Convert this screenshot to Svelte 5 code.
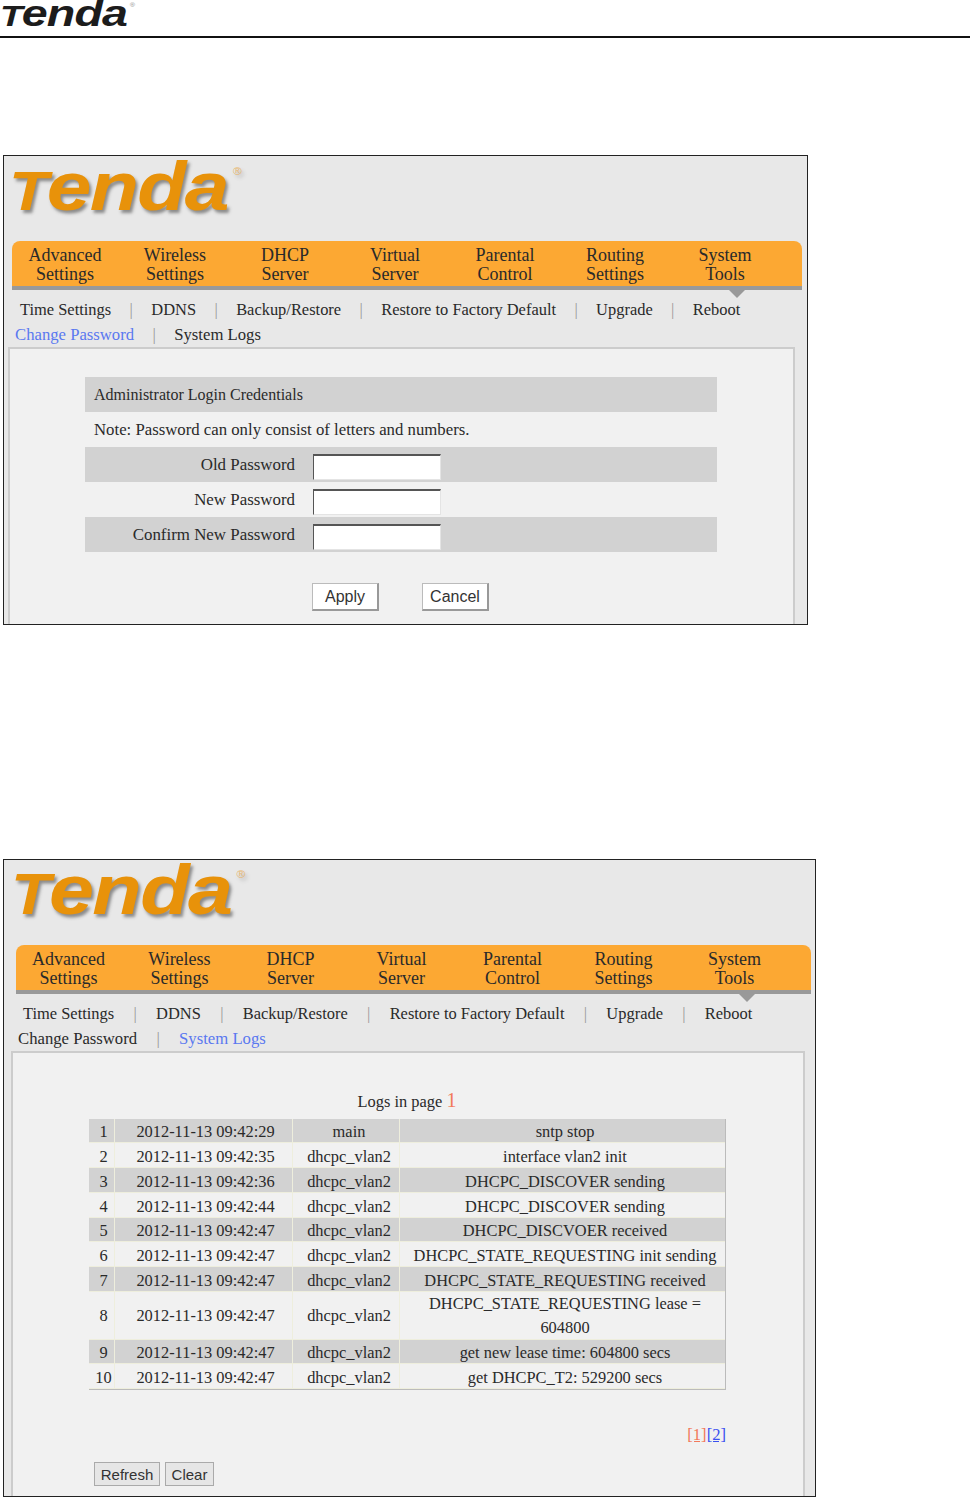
<script>
  const navItems = [
    ['Advanced', 'Settings'],
    ['Wireless', 'Settings'],
    ['DHCP', 'Server'],
    ['Virtual', 'Server'],
    ['Parental', 'Control'],
    ['Routing', 'Settings'],
    ['System', 'Tools']
  ];

  const subRow1 = ['Time Settings', 'DDNS', 'Backup/Restore', 'Restore to Factory Default', 'Upgrade', 'Reboot'];

  const passwordFields = ['Old Password', 'New Password', 'Confirm New Password'];

  const logs = [
    ['2012-11-13 09:42:29', 'main', 'sntp stop'],
    ['2012-11-13 09:42:35', 'dhcpc_vlan2', 'interface vlan2 init'],
    ['2012-11-13 09:42:36', 'dhcpc_vlan2', 'DHCPC_DISCOVER sending'],
    ['2012-11-13 09:42:44', 'dhcpc_vlan2', 'DHCPC_DISCOVER sending'],
    ['2012-11-13 09:42:47', 'dhcpc_vlan2', 'DHCPC_DISCVOER received'],
    ['2012-11-13 09:42:47', 'dhcpc_vlan2', 'DHCPC_STATE_REQUESTING init sending'],
    ['2012-11-13 09:42:47', 'dhcpc_vlan2', 'DHCPC_STATE_REQUESTING received'],
    ['2012-11-13 09:42:47', 'dhcpc_vlan2', 'DHCPC_STATE_REQUESTING lease = 604800'],
    ['2012-11-13 09:42:47', 'dhcpc_vlan2', 'get new lease time: 604800 secs'],
    ['2012-11-13 09:42:47', 'dhcpc_vlan2', 'get DHCPC_T2: 529200 secs']
  ];
</script>

{#snippet wordmark()}
  <span class="word"><span class="t">T</span>enda<sup>®</sup></span>
{/snippet}

{#snippet routerTop(active)}
  <div class="brand">{@render wordmark()}</div>
  <nav class="nav">
    {#each navItems as item}
      <div class="nav-item">{item[0]}<br />{item[1]}</div>
    {/each}
  </nav>
  <div class="sub-nav">
    <div class="sub-row first">
      {#each subRow1 as label, i}
        {#if i > 0}<span class="sep">|</span>{/if}
        <span>{label}</span>
      {/each}
    </div>
    <div class="sub-row second">
      <span class:active={active === 'Change Password'}>Change Password</span>
      <span class="sep">|</span>
      <span class:active={active === 'System Logs'}>System Logs</span>
    </div>
  </div>
{/snippet}

<header class="doc-header">
  <div class="doc-logo">{@render wordmark()}</div>
</header>

<section class="shot shot-password">
  {@render routerTop('Change Password')}
  <div class="panel">
    <div class="form-table">
      <div class="form-row grey title">Administrator Login Credentials</div>
      <div class="form-row title note">Note: Password can only consist of letters and numbers.</div>
      {#each passwordFields as field, i}
        <div class="form-row field" class:grey={i % 2 === 0}>
          <label for="pw{i}">{field}</label>
          <input id="pw{i}" type="password" />
        </div>
      {/each}
    </div>
    <div class="form-actions">
      <button class="btn-white">Apply</button>
      <button class="btn-white">Cancel</button>
    </div>
  </div>
</section>

<section class="shot shot-logs">
  {@render routerTop('System Logs')}
  <div class="panel">
    <p class="logs-title">Logs in page <span class="page-no">1</span></p>
    <table class="log-table">
      <colgroup>
        <col class="c-num" />
        <col class="c-time" />
        <col class="c-proc" />
        <col />
      </colgroup>
      <tbody>
        {#each logs as log, i}
          <tr class:grey={i % 2 === 0} class:tall={i === 7} class:short={i === 0 || i === 4 || i === 8}>
            <td class="num">{i + 1}</td>
            <td class="time">{log[0]}</td>
            <td class="proc">{log[1]}</td>
            <td class="msg">{log[2]}</td>
          </tr>
        {/each}
      </tbody>
    </table>
    <div class="pager"><a href="#p1" class="cur">[1]</a><a href="#p2">[2]</a></div>
    <div class="log-actions">
      <button class="btn-grey refresh">Refresh</button>
      <button class="btn-grey clear">Clear</button>
    </div>
  </div>
</section>

<style>
  :global(body) {
    background: #fff;
    font-family: "Liberation Serif", serif;
    color: #2a2a2a;
  }

  .doc-header {
    height: 36px;
    border-bottom: 2px solid #111;
    --logo-stretch: 1.26;
  }

  .doc-logo {
    font: italic bold 37px/28px "Liberation Sans", sans-serif;
    color: #1c1c1c;
    white-space: nowrap;
  }

  .word {
    display: inline-block;
    transform: scaleX(var(--logo-stretch));
    transform-origin: left;
    letter-spacing: -0.02em;
  }

  .t {
    font-size: 0.8em;
  }

  .word sup {
    font-size: 0.15em;
    font-weight: normal;
    letter-spacing: 0;
    vertical-align: 3.4em;
    line-height: 0;
    margin-left: 0.4em;
    opacity: 0.55;
  }

  .shot {
    margin-left: 3px;
    box-sizing: border-box;
    border: 1px solid #222;
    background: #e8e8e8;
    display: flex;
    flex-direction: column;
  }

  .shot-password {
    margin-top: 117px;
    width: 805px;
    height: 470px;
    --nav-left: 8px;
    --nav-width: 790px;
    --nav-step: 110px;
    --nav-shift: -2px;
    --brand-left: 5px;
    --brand-size: 69px;
    --brand-line: 62px;
    --logo-stretch: 1.165;
    --row-first: 16px;
    --row-second: 11px;
    --row-gap: 18.4px;
    --panel-left: 4px;
    --panel-width: 787px;
    --tri-left: 716px;
  }

  .shot-logs {
    margin-top: 234px;
    width: 813px;
    height: 638px;
    --nav-left: 12px;
    --nav-width: 795px;
    --nav-step: 111px;
    --nav-shift: -3px;
    --brand-left: 7px;
    --brand-size: 71px;
    --brand-line: 59px;
    --logo-stretch: 1.14;
    --row-first: 19px;
    --row-second: 14px;
    --row-gap: 19.3px;
    --panel-left: 7px;
    --panel-width: 794px;
    --tri-left: 722px;
  }

  .brand {
    height: 85px;
    padding-left: var(--brand-left);
    font: italic bold var(--brand-size) / var(--brand-line) "Liberation Sans", sans-serif;
    color: #e8920a;
    text-shadow: 2px 3px 3px #8a8a8a;
    white-space: nowrap;
  }

  .nav {
    position: relative;
    margin-left: var(--nav-left);
    width: var(--nav-width);
    box-sizing: border-box;
    height: 49px;
    padding-top: 5px;
    background: #fca833;
    border-bottom: 4px solid #999;
    border-radius: 8px 8px 0 0;
    display: flex;
    font-size: 18px;
    line-height: 19px;
    color: #2a2a2a;
  }

  .nav::after {
    content: '';
    position: absolute;
    left: var(--tri-left);
    bottom: -12px;
    border: 9px solid transparent;
    border-bottom: 0;
    border-top-color: #999;
  }

  .nav-item {
    width: var(--nav-step);
    flex: none;
    text-align: center;
    position: relative;
    left: var(--nav-shift);
  }

  .sub-nav {
    font-size: 16.45px;
    line-height: 25px;
    padding-top: 7px;
    height: 50px;
    color: #2a2a2a;
  }

  .sub-row {
    display: flex;
    gap: var(--row-gap);
    padding-left: var(--row-second);
    white-space: nowrap;
  }

  .sub-row.first {
    padding-left: var(--row-first);
  }

  .sub-row.second {
    font-size: 16.7px;
  }

  .sep {
    color: #999;
  }

  .active {
    color: #5a78f0;
  }

  .panel {
    flex: 1;
    margin-left: var(--panel-left);
    width: var(--panel-width);
    box-sizing: border-box;
    border: 2px solid #ccc;
    border-bottom: 0;
    background: #f1f1f1;
    font-size: 16px;
  }

  .form-table {
    margin: 28px 0 0 75px;
    width: 632px;
  }

  .form-row {
    height: 35px;
    line-height: 35px;
    box-sizing: border-box;
  }

  .form-row.title {
    padding-left: 9px;
  }

  .form-row.note {
    font-size: 16.75px;
    line-height: 36px;
  }

  .grey {
    background: #d2d2d2;
  }

  .form-row.field {
    display: flex;
    align-items: flex-start;
  }

  .field label {
    width: 210px;
    text-align: right;
    flex: none;
    font-size: 16.9px;
  }

  .field input {
    margin: 7px 0 0 18px;
    width: 128px;
    height: 26px;
    box-sizing: border-box;
    padding: 0;
    background: #fff;
    border: 1px solid #e4e4e4;
    border-top: 2px solid #555;
    border-left: 1px solid #555;
  }

  .form-actions {
    display: flex;
    gap: 43px;
    margin: 31px 0 0 302px;
  }

  .btn-white {
    width: 67px;
    height: 28px;
    box-sizing: border-box;
    padding: 0;
    background: #fff;
    border: 1px solid #bbb;
    border-right: 2px solid #999;
    border-bottom: 2px solid #999;
    font: 16px "Liberation Sans", sans-serif;
    color: #333;
  }

  .logs-title {
    margin: 36px 0 0;
    height: 30px;
    line-height: 22px;
    text-align: center;
    width: 788px;
    font-size: 16.4px;
  }

  .page-no {
    color: #f2795a;
    font-size: 20px;
  }

  .log-table {
    margin-left: 76px;
    width: 637px;
    table-layout: fixed;
    border-collapse: separate;
    border-spacing: 0;
    border-right: 1px solid #bbb;
    border-bottom: 1px solid #bbb;
    font-size: 16.4px;
  }

  .c-num {
    width: 26px;
  }

  .c-time {
    width: 178px;
  }

  .c-proc {
    width: 107px;
  }

  .log-table td {
    height: 25px;
    box-sizing: border-box;
    padding: 3px 0 0;
    line-height: 20px;
    text-align: center;
    white-space: nowrap;
    border-right: 1px solid #eeeedd;
    border-bottom: 1px solid #eeeedd;
  }

  .log-table tr.short td {
    height: 24px;
  }

  .log-table td:last-child {
    border-right: 0;
  }

  .log-table td.num {
    padding-left: 4px;
  }

  .log-table td.time {
    padding-left: 4px;
  }

  .log-table td.proc {
    padding-left: 6px;
  }

  .log-table td.msg {
    padding-left: 5px;
    white-space: normal;
  }

  .log-table tr.tall td {
    height: 48px;
    padding-top: 0;
  }

  .log-table tr.tall td.msg {
    line-height: 23.5px;
  }

  .pager {
    margin-top: 35px;
    width: 713px;
    text-align: right;
    line-height: 20px;
    font-size: 16.6px;
  }

  .pager a {
    color: #3a50f0;
    text-decoration: underline;
  }

  .pager a.cur {
    color: #f2795a;
  }

  .log-actions {
    display: flex;
    gap: 5px;
    margin: 17px 0 0 81px;
  }

  .btn-grey {
    height: 24px;
    box-sizing: border-box;
    padding: 0;
    background: #e6e6e6;
    border: 1px solid #aaa;
    font: 15px "Liberation Sans", sans-serif;
    color: #333;
  }

  .refresh {
    width: 66px;
  }

  .clear {
    width: 49px;
  }
</style>
